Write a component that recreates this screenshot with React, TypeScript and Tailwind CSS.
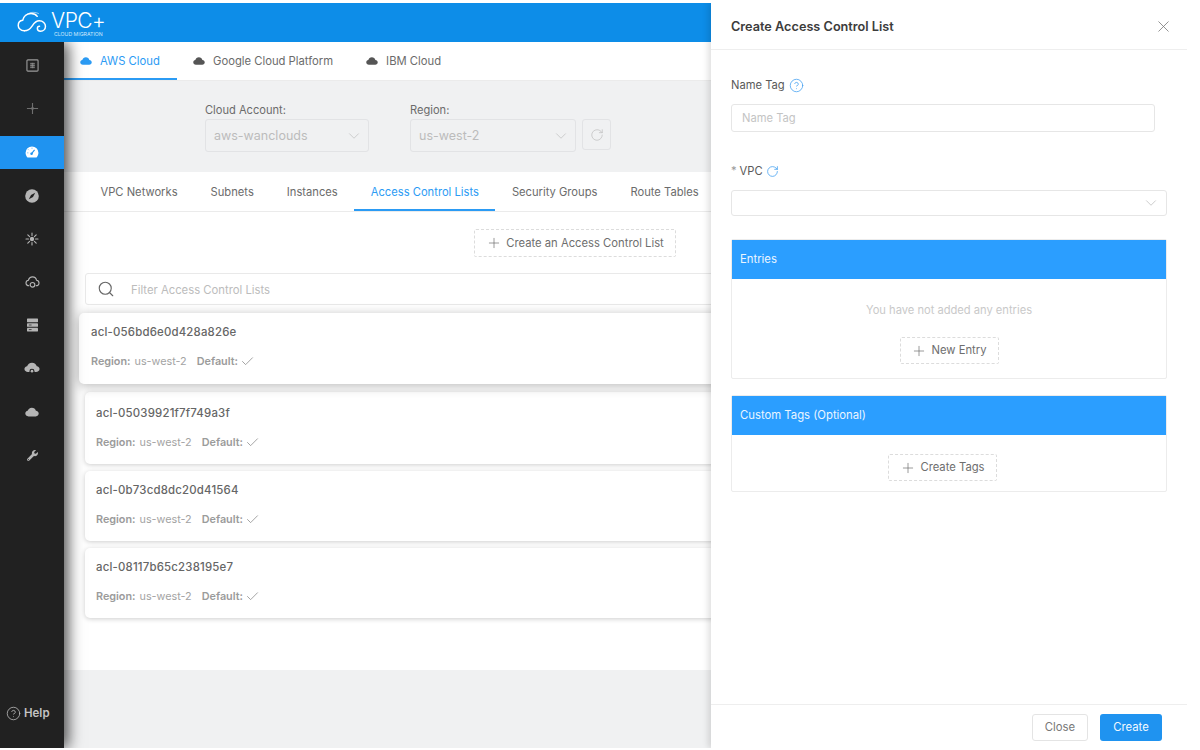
import React from "react";
import { ChevronDown, Check, Plus, Search, X, RotateCw, CircleHelp } from "lucide-react";
import { FaWrench } from "react-icons/fa";

const Cloud = ({ className }: { className?: string }) => (
  <svg viewBox="0 0 24 16" className={className} fill="currentColor">
    <path d="M6 15.5C2.7 15.5.5 13.4.5 10.7c0-2.4 1.7-4.3 4.1-4.7C5.4 2.900 8.200.5 11.700.5c3.400 0 6.200 2.200 7 5.300 2.800.2 4.800 2.300 4.800 4.900 0 2.700-2.200 4.800-5 4.800H6z" />
  </svg>
);

const Logo = () => (
  <svg viewBox="0 0 40 30" className="h-[25px] w-[33px]" fill="none" stroke="#fff" strokeWidth="1.8" strokeLinecap="round">
    <path d="M9 25C4 25 1.500 21.500 1.500 18.500 1.500 15 4 12.500 7 12.200 8 7.500 12 4 17 4c3 0 6 1.200 7.500 3.500" />
    <path d="M9 25c5 0 7.500-3 9.500-6s4.500-6 8.500-6c4.500 0 7.500 3 7.500 6.500S32 25.500 28.500 25.500c-2.500 0-3.800-1.500-3.800-3.300 0-1.500 1-2.700 2.600-2.700" />
    <path d="M11 6.500C14 2.500 20 1.500 26 4" strokeWidth="1" opacity="0.7" />
  </svg>
);

const Chip = () => (
  <svg viewBox="0 0 14 14" className="h-[13px] w-[13px]" fill="none" stroke="#9a9a9a">
    <rect x="1" y="1" width="12" height="12" rx="1" strokeWidth="1.200" />
    <path d="M4.500 5h5M4.500 7h5M4.500 9h5M5.500 4v6M7 4v6M8.500 4v6" strokeWidth="0.700" />
  </svg>
);

const Cross = () => (
  <svg viewBox="0 0 14 14" className="h-[13px] w-[13px]" stroke="#6f6f6f" strokeWidth="1.200">
    <path d="M7 1v12M1 7h12" />
    <circle cx="7" cy="7" r="1.500" fill="#6f6f6f" stroke="none" />
  </svg>
);

const Gauge = () => (
  <svg viewBox="0 0 16 14" className="h-[12px] w-[14px]">
    <path fill="#fff" d="M8 .5a7.500 7.500 0 0 0-7.500 7.500c0 2.200.9 4 2.200 5.500h10.600c1.300-1.500 2.200-3.300 2.200-5.500A7.500 7.500 0 0 0 8 .5z" />
    <path stroke="#1f93f0" strokeWidth="1.300" d="M7.500 9 11 4.500" />
    <circle cx="7.500" cy="9" r="1.500" fill="#1f93f0" />
    <path stroke="#1f93f0" strokeWidth="0.800" d="M8 2v1.200M3.500 4l.8.800M2.500 8h1.200" />
  </svg>
);

const Compass = () => (
  <svg viewBox="0 0 14 14" className="h-[14px] w-[14px]">
    <circle cx="7" cy="7" r="6.800" fill="#b5b5b5" />
    <path d="M3.800 10.200 6 6l4.200-2.200L8 8z" fill="#212121" />
  </svg>
);

const Snow = () => (
  <svg viewBox="0 0 14 14" className="h-[14px] w-[14px]" stroke="#b5b5b5" strokeWidth="1.100" strokeLinecap="round">
    <path d="M7 1v2.500M7 10.500V13M1 7h2.500M10.500 7H13M2.800 2.800l1.800 1.800M9.400 9.400l1.800 1.800M11.200 2.800 9.400 4.600M4.600 9.400l-1.800 1.800" />
    <circle cx="7" cy="7" r="2.200" fill="#b5b5b5" stroke="none" />
  </svg>
);

const CloudRing = () => (
  <svg viewBox="0 0 16 14" className="h-[13px] w-[15px]" fill="none" stroke="#b5b5b5" strokeWidth="1.200">
    <path d="M4.500 10.500C2.500 10.500 1 9.200 1 7.500c0-1.500 1.100-2.700 2.600-2.900C4.200 2.500 6 1 8 1c2.200 0 4 1.500 4.400 3.600 1.500.2 2.600 1.400 2.600 2.900 0 1.700-1.500 3-3.500 3" />
    <circle cx="8" cy="9.500" r="2.500" />
  </svg>
);

const CloudGear = () => (
  <svg viewBox="0 0 18 14" className="h-[13px] w-[16px]">
    <path fill="#b5b5b5" d="M4.500 11C2.300 11 .5 9.600.5 7.700c0-1.700 1.200-3 3-3.200C4.200 2.200 6.300.5 9 .5c2.700 0 4.800 1.700 5.400 4 1.900.2 3.100 1.500 3.100 3.200 0 1.900-1.800 3.300-4 3.300z" />
    <circle cx="9" cy="10" r="2.800" fill="#212121" />
    <circle cx="9" cy="10" r="1.500" fill="#b5b5b5" />
  </svg>
);

const Rows = () => (
  <svg viewBox="0 0 12 14" className="h-[14px] w-[11px]" fill="#b5b5b5">
    <rect x="0" y="0" width="12" height="4" rx="0.500" />
    <rect x="0" y="5" width="12" height="4" rx="0.500" />
    <rect x="0" y="10" width="12" height="4" rx="0.500" />
    <path d="M2 7h3M2 12h3" stroke="#212121" strokeWidth="0.800" />
  </svg>
);

const side = [
  <Chip key="a" />,
  <Cross key="b" />,
  <Gauge key="c" />,
  <Compass key="d" />,
  <Snow key="e" />,
  <CloudRing key="f" />,
  <Rows key="g" />,
  <CloudGear key="h" />,
  <Cloud key="i" className="h-[10px] w-[14px] text-[#b5b5b5]" />,
  <FaWrench key="j" size={11} className="text-[#b5b5b5]" />,
];

const Meta = () => (
  <div className="flex items-center text-[10.800px] leading-[14px] text-[#a3a3a3]">
    <span className="font-semibold text-[#9b9b9b]">Region:</span>
    <span className="ml-1">us-west-2</span>
    <span className="ml-[10px] font-semibold text-[#9b9b9b]">Default:</span>
    <Check size={15} strokeWidth={1.300} className="ml-[2px] text-[#8f8f8f]" />
  </div>
);

const Card = ({ id, className }: { id: string; className: string }) => (
  <div className={`flex flex-col rounded-[5px] bg-white ${className}`}>
    <div className="text-[11.400px] font-medium leading-[14px] tracking-[0.2px] text-[#666]">{id}</div>
    <div className="mt-[15px]">
      <Meta />
    </div>
  </div>
);

const Select = ({ label, value, w }: { label: string; value: string; w: string }) => (
  <div className="flex flex-col">
    <div className="mb-[1px] text-[11.100px] leading-[15px] text-[#6b6b6b]">{label}</div>
    <div className={`flex h-[33px] items-center justify-between rounded-[3px] border border-[#e2e3e5] bg-[#f0f1f2] pl-[8px] pr-[5px] pt-[1px] text-[12.500px] text-[#bcbcbc] ${w}`}>
      <span>{value}</span>
      <ChevronDown size={18} strokeWidth={1} className="text-[#c0c0c0]" />
    </div>
  </div>
);

const Dashed = ({ label, className }: { label: string; className: string }) => (
  <div className={`flex items-center justify-center gap-[4px] rounded-[2px] border border-dashed border-[#dcdcdc] bg-white text-[11.250px] text-[#6e6e6e] ${className}`}>
    <Plus size={16} strokeWidth={1} className="text-[#666]" />
    <span>{label}</span>
  </div>
);

const tabs = ["VPC Networks", "Subnets", "Instances", "Access Control Lists", "Security Groups", "Route Tables"];

export default function App() {
  return (
    <div className="relative h-[750px] w-[1200px] overflow-hidden bg-white font-['Inter',sans-serif]">
      <div className="relative ml-0 mt-[3px] flex h-[745px] w-[1187px] flex-col overflow-hidden">
        <header className="relative z-20 flex h-[39px] shrink-0 items-center bg-[#0d8de8] pl-[17px]">
          <Logo />
          <div className="ml-[1px] mt-[2px] flex flex-col text-white">
            <span className="text-[21px] font-light leading-[21px] tracking-[-0.5px]">VPC+</span>
            <span className="ml-[3px] text-[5.200px] leading-[6px] text-[#cfe8fb]">CLOUD MIGRATION</span>
          </div>
        </header>
        <div className="flex min-h-0 flex-1">
          <aside className="relative z-10 flex w-[64px] shrink-0 flex-col bg-[#212121] shadow-[4px_0_14px_rgba(0,0,0,0.7)]">
            <div className="flex flex-col pt-[2px]">
              {side.map((icon, i) => (
                <div key={i} className="flex h-[43.300px] items-center justify-center">
                  <div className={`flex h-[33px] w-full items-center justify-center ${i === 2 ? "bg-[#1f93f0]" : ""}`}>{icon}</div>
                </div>
              ))}
            </div>
            <div className="mt-auto mb-[26px] flex items-center gap-[3px] pl-[6px] text-[11.500px] font-semibold text-[#c4c4c4]">
              <CircleHelp size={15} strokeWidth={1.200} />
              <span>Help</span>
            </div>
          </aside>
          <main className="flex min-w-0 flex-1 flex-col bg-[#f0f1f2]">
            <div className="flex h-[39px] shrink-0 items-stretch border-b border-[#ebebeb] bg-white text-[11.250px] text-[#6b6b6b]">
              <div className="flex w-[113px] items-center gap-[8px] border-b-2 border-[#2b9bf4] pl-[16px] pt-[2px] text-[#2b9bf4]">
                <Cloud className="h-[8px] w-[12px]" />
                <span>AWS Cloud</span>
              </div>
              <div className="ml-[16px] flex items-center gap-[8px]">
                <Cloud className="h-[8px] w-[12px] text-[#555]" />
                <span>Google Cloud Platform</span>
              </div>
              <div className="ml-[33px] flex items-center gap-[8px]">
                <Cloud className="h-[8px] w-[12px] text-[#555]" />
                <span>IBM Cloud</span>
              </div>
            </div>
            <div className="flex h-[91px] shrink-0 items-start pl-[141px] pt-[22px]">
              <Select label="Cloud Account:" value="aws-wanclouds" w="w-[164px]" />
              <div className="ml-[41px]">
                <Select label="Region:" value="us-west-2" w="w-[166px]" />
              </div>
              <div className="ml-[6px] mt-[16px] flex h-[31px] w-[29px] items-center justify-center rounded-[3px] border border-[#e2e3e5] text-[#bdbdbd]">
                <RotateCw size={14} strokeWidth={1.200} />
              </div>
            </div>
            <div className="flex h-[498px] shrink-0 flex-col bg-white pb-[52px]">
              <div className="flex h-[40px] shrink-0 items-stretch border-b border-[#ebebeb] pl-[20px] text-[11.200px] text-[#6b6b6b]">
                {tabs.map((t) => (
                  <div
                    key={t}
                    className={`flex items-center px-[16.500px] ${t === "Access Control Lists" ? "border-b-2 border-[#2b9bf4] pt-[3px] text-[#2b9bf4]" : "pt-[1px]"}`}
                  >
                    {t}
                  </div>
                ))}
              </div>
              <div className="ml-[410px] mt-[17px] shrink-0">
                <Dashed label="Create an Access Control List" className="h-[28px] w-[202px]" />
              </div>
              <div className="ml-[21px] mt-[16px] flex h-[32px] shrink-0 items-center rounded-[3px] border border-[#e9e9e9] bg-white pl-[11px] pt-[2px] text-[11.300px] text-[#bcbcbc]">
                <Search size={18} strokeWidth={1.500} className="-mt-[2px] text-[#666]" />
                <span className="ml-[16px]">Filter Access Control Lists</span>
              </div>
              <div className="relative ml-[15px] mt-[8px] shrink-0">
                <Card id="acl-056bd6e0d428a826e" className="h-[71px] pl-[12px] pt-[12px] shadow-[0_2px_12px_rgba(0,0,0,0.28)]" />
              </div>
              <div className="ml-[21px] mt-[8px] shrink-0">
                <Card id="acl-05039921f7f749a3f" className="h-[72px] pl-[11px] pt-[14px] shadow-[0_1px_5px_rgba(0,0,0,0.2)]" />
              </div>
              <div className="ml-[21px] mt-[7px] shrink-0">
                <Card id="acl-0b73cd8dc20d41564" className="h-[70px] pl-[11px] pt-[12px] shadow-[0_1px_5px_rgba(0,0,0,0.2)]" />
              </div>
              <div className="ml-[21px] mt-[7px] shrink-0">
                <Card id="acl-08117b65c238195e7" className="h-[70px] pl-[11px] pt-[12px] shadow-[0_1px_5px_rgba(0,0,0,0.2)]" />
              </div>
            </div>
          </main>
        </div>
        <aside className="absolute bottom-0 right-0 top-0 z-30 flex w-[476px] flex-col bg-white pt-[1px] shadow-[-3px_0_6px_rgba(0,0,0,0.12)]">
          <div className="flex h-[46px] shrink-0 items-center justify-between border-b border-[#eeeeee] pl-[20px] pr-[14px] text-[12.700px] font-semibold text-[#3c3c3c]">
            <span>Create Access Control List</span>
            <X size={19} strokeWidth={1} className="text-[#777]" />
          </div>
          <div className="flex min-h-0 flex-1 flex-col pl-[20px] pr-[20px]">
            <div className="mt-[27px] flex h-[16px] items-center gap-[4px] text-[11.200px] text-[#5a5a5a]">
              <span>Name Tag</span>
              <CircleHelp size={15} strokeWidth={1.200} className="text-[#3f9ef0]" />
            </div>
            <div className="mt-[11px] flex h-[28px] w-[424px] items-center rounded-[3px] border border-[#e6e6e6] pl-[10px] text-[11.200px] text-[#c4c4c4]">
              Name Tag
            </div>
            <div className="mt-[31px] flex h-[16px] items-center gap-[3px] text-[11.200px] text-[#5a5a5a]">
              <span className="text-[#999]">*</span>
              <span>VPC</span>
              <RotateCw size={13} strokeWidth={1.400} className="text-[#3f9ef0]" />
            </div>
            <div className="mt-[11px] flex h-[26px] items-center justify-end rounded-[3px] border border-[#e6e6e6] pr-[6px]">
              <ChevronDown size={18} strokeWidth={1} className="text-[#bbb]" />
            </div>
            <section className="mt-[23px] flex h-[140px] flex-col rounded-[2px] border border-[#ececec]">
              <div className="flex h-[39px] shrink-0 items-center bg-[#2b9eff] pl-[8px] text-[11.300px] text-[#eaf5ff]">Entries</div>
              <div className="mt-[24px] text-center text-[11.150px] leading-[14px] text-[#c9c9c9]">You have not added any entries</div>
              <div className="mt-[20px] flex justify-center">
                <Dashed label="New Entry" className="h-[27px] w-[99px]" />
              </div>
            </section>
            <section className="mt-[16px] flex h-[97px] flex-col rounded-[2px] border border-[#ececec]">
              <div className="flex h-[39px] shrink-0 items-center bg-[#2b9eff] pl-[8px] text-[11.300px] text-[#eaf5ff]">Custom Tags (Optional)</div>
              <div className="ml-[156px] mt-[19px]">
                <Dashed label="Create Tags" className="h-[27px] w-[109px]" />
              </div>
            </section>
          </div>
          <div className="flex h-[44px] shrink-0 items-center justify-end gap-[12px] border-t border-[#eeeeee] pr-[25px] pt-[1px] text-[11.300px]">
            <div className="flex h-[27px] w-[56px] items-center justify-center rounded-[3px] border border-[#e4e4e4] text-[#777]">Close</div>
            <div className="flex h-[27px] w-[62px] items-center justify-center rounded-[3px] bg-[#1f93f0] text-[#f2f9ff]">Create</div>
          </div>
        </aside>
      </div>
    </div>
  );
}
